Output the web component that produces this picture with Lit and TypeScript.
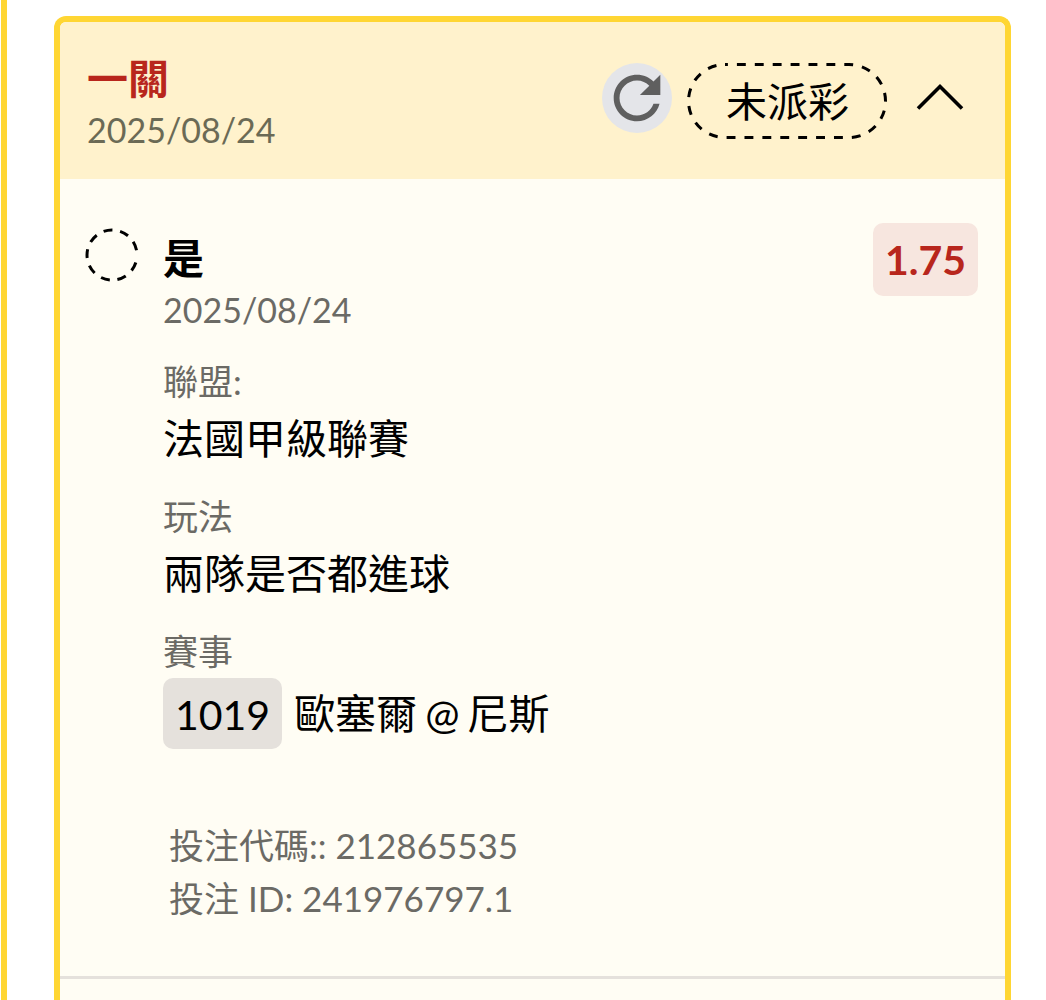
import { LitElement, html, css } from "lit";
import { customElement, property, state } from "lit/decorators.js";

@customElement("bet-leg")
class BetLeg extends LitElement {
  @property() pick = "";
  @property() date = "";
  @property() odds = "";
  @property() league = "";
  @property() market = "";
  @property() eventNo = "";
  @property() away = "";
  @property() home = "";

  static styles = css`
    :host {
      display: block;
    }
    .leg {
      display: flex;
      align-items: flex-start;
    }
    .marker {
      flex: none;
      width: 54px;
      height: 54px;
      margin: 5px 24px 0 0;
    }
    .main {
      flex: 1;
      min-width: 0;
      padding-top: 10px;
    }
    .pick {
      margin: 0;
      font-size: 41px;
      line-height: 52px;
      font-weight: 700;
    }
    .date {
      font-size: 34px;
      line-height: 50px;
      color: #6b6a65;
    }
    .odds {
      flex: none;
      padding: 6px 12px;
      border-radius: 10px;
      background: #f7e6df;
      color: #b8261c;
      font-size: 41px;
      line-height: 61px;
      font-weight: 700;
    }
    dl {
      display: flex;
      flex-direction: column;
      gap: 21px;
      margin: 20px 0 0;
    }
    dt {
      font-size: 35px;
      line-height: 53px;
      color: #6b6a65;
    }
    dd {
      display: flex;
      align-items: center;
      gap: 12px;
      margin: 0;
      font-size: 41px;
      line-height: 61px;
    }
    .number {
      padding: 6px 12px 4px;
      border-radius: 10px;
      background: #e5e1dc;
    }
    .teams {
      display: flex;
      gap: 8px;
    }
  `;

  render() {
    return html`
      <div class="leg">
        <svg class="marker" viewBox="0 0 54 54" aria-hidden="true">
          <circle cx="27" cy="27" r="25" fill="none" stroke="#000" stroke-width="3"
            stroke-dasharray="9 7.8" stroke-dashoffset="-7.7" />
        </svg>
        <div class="main">
          <h3 class="pick">${this.pick}</h3>
          <div class="date">${this.date}</div>
          <dl>
            <div><dt>聯盟:</dt><dd>${this.league}</dd></div>
            <div><dt>玩法</dt><dd>${this.market}</dd></div>
            <div>
              <dt>賽事</dt>
              <dd>
                <span class="number">${this.eventNo}</span>
                <span class="teams"><span>${this.away}</span> <span>@</span> <span>${this.home}</span></span>
              </dd>
            </div>
          </dl>
        </div>
        <div class="odds">${this.odds}</div>
      </div>
    `;
  }
}

@customElement("app-root")
class AppRoot extends LitElement {
  @state() open = true;

  static styles = css`
    :host {
      display: block;
      font-family: Lato, "Noto Sans CJK TC", sans-serif;
      color: #000;
      background: #fff;
    }
    .panel {
      box-sizing: border-box;
      display: flex;
      min-height: 100vh;
      margin-left: 1px;
      padding: 16px 35px 0 47px;
      border-left: 6px solid #ffd633;
    }
    .ticket {
      flex: 1;
      min-width: 0;
      display: flex;
      flex-direction: column;
      border: 6px solid #ffd633;
      border-bottom: 0;
      border-radius: 12px 12px 0 0;
      background: #fffdf4;
    }
    .head {
      display: flex;
      align-items: center;
      justify-content: space-between;
      padding: 0 41px 0 27px;
      border-radius: 6px 6px 0 0;
      background: #fff2cc;
    }
    .heading {
      padding: 31px 0 24px;
    }
    .title {
      margin: 0;
      font-size: 41px;
      line-height: 52px;
      font-weight: 700;
      color: #b8261c;
    }
    .date {
      font-size: 34px;
      line-height: 50px;
      color: #6b6a55;
    }
    .actions {
      display: flex;
      align-items: center;
    }
    button {
      display: block;
      padding: 0;
      border: 0;
      background: none;
      color: inherit;
      cursor: pointer;
    }
    .refresh {
      width: 70px;
      height: 70px;
      margin: 0 15px 6px 0;
      border-radius: 50%;
      background: #e4e5e9;
    }
    .refresh svg,
    .toggle svg {
      display: block;
    }
    .status {
      position: relative;
      padding: 9px 38px 7px 39px;
      font-size: 41px;
      line-height: 60px;
    }
    .outline {
      position: absolute;
      inset: 0;
      width: 100%;
      height: 100%;
    }
    .toggle {
      margin: 0 0 8px 29px;
    }
    .toggle.closed svg {
      transform: rotate(180deg);
    }
    .body {
      padding: 44px 27px 51px 25px;
      border-bottom: 3px solid #e5e1dc;
    }
    .codes {
      margin: 0;
      padding: 70px 0 0 84px;
      font-size: 35px;
      line-height: 53px;
      color: #6b6a65;
    }
    .codes p {
      margin: 0;
    }
  `;

  render() {
    return html`
      <main class="panel">
        <article class="ticket">
          <header class="head">
            <div class="heading">
              <h2 class="title">一關</h2>
              <div class="date">2025/08/24</div>
            </div>
            <div class="actions">
              <button class="refresh" type="button" aria-label="重新整理">
                <svg width="70" height="70" viewBox="0 0 24 24" aria-hidden="true">
                  <path fill="#5f5f5f" d="M17.65 6.35C16.2 4.9 14.21 4 12 4c-4.42 0-7.99 3.58-7.99 8s3.57 8 7.99 8c3.73 0 6.84-2.55 7.73-6h-2.08c-.82 2.33-3.04 4-5.65 4-3.31 0-6-2.69-6-6s2.69-6 6-6c1.66 0 3.14.69 4.22 1.78L13 11h7V4l-2.35 2.35z" />
                </svg>
              </button>
              <div class="status">
                <svg class="outline" viewBox="0 0 200 76" preserveAspectRatio="none" aria-hidden="true">
                  <rect x="1.5" y="1.5" width="197" height="73" rx="36.5" fill="none" stroke="#000"
                    stroke-width="3" stroke-dasharray="8.9 9" stroke-dashoffset="6" />
                </svg>
                未派彩
              </div>
              <button class="toggle ${this.open ? "" : "closed"}" type="button" aria-label="展開或收合"
                aria-expanded=${this.open ? "true" : "false"} @click=${() => (this.open = !this.open)}>
                <svg width="48" height="28" viewBox="0 0 48 28" aria-hidden="true">
                  <path d="M2 25.5 24 3.5 46 25.5" fill="none" stroke="#000" stroke-width="3.6" />
                </svg>
              </button>
            </div>
          </header>
          ${this.open
            ? html`
                <section class="body">
                  <bet-leg
                    pick="是"
                    date="2025/08/24"
                    odds="1.75"
                    league="法國甲級聯賽"
                    market="兩隊是否都進球"
                    .eventNo=${"1019"}
                    away="歐塞爾"
                    home="尼斯"
                  ></bet-leg>
                  <div class="codes">
                    <p>投注代碼:: 212865535</p>
                    <p>投注 ID: 241976797.1</p>
                  </div>
                </section>
              `
            : ""}
        </article>
      </main>
    `;
  }
}
